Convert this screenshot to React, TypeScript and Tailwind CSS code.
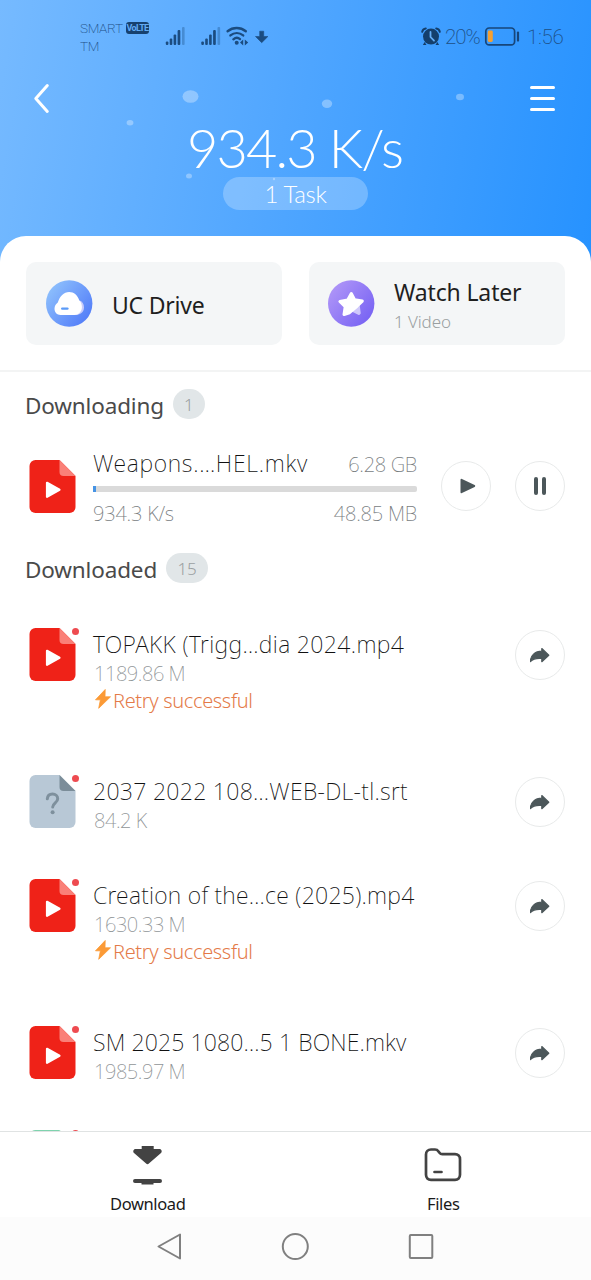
import type { ReactNode } from "react";

type FileKind = "video" | "unknown" | "audio";

interface DownloadedFile {
  name: string;
  size: string;
  kind: FileKind;
  retried?: boolean;
  titleClass: string;
}

const files: DownloadedFile[] = [
  { name: "TOPAKK (Trigg…dia 2024.mp4", size: "1189.86 M", kind: "video", retried: true, titleClass: "tracking-[0.38px]" },
  { name: "2037 2022 108…WEB-DL-tl.srt", size: "84.2 K", kind: "unknown", titleClass: "tracking-[0.3px]" },
  { name: "Creation of the…ce (2025).mp4", size: "1630.33 M", kind: "video", retried: true, titleClass: "tracking-[0.27px]" },
  { name: "SM 2025 1080…5 1 BONE.mkv", size: "1985.97 M", kind: "video", titleClass: "tracking-[0.13px]" },
];

function StatusIcons() {
  return (
    <svg className="ml-[15px] mt-[25px] h-6 w-[106px] shrink-0" viewBox="164 25 106 24" fill="#1b4c80">
      {[0, 35.5].map((dx) => (
        <g key={dx} transform={`translate(${dx} 0)`}>
          <rect x="165.8" y="41.5" width="2.6" height="3.5" rx="1" />
          <rect x="169.7" y="38.5" width="2.6" height="6.5" rx="1" />
          <rect x="173.6" y="34.5" width="2.6" height="10.5" rx="1" />
          <rect x="177.6" y="30" width="2.7" height="15" rx="1" />
          <rect x="182" y="27" width="2.6" height="18" rx="1" opacity=".35" />
        </g>
      ))}
      <g fill="none" stroke="#1b4c80" strokeWidth="2.4" strokeLinecap="round">
        <path d="M227.6 31.2c5.4-4.3 12.8-4.3 18.2 0" />
        <path d="M230.4 35.4c3.8-3.1 9-3.1 12.8 0" />
        <path d="M233.4 39.3c2-1.7 4.8-1.7 6.6-.2" />
      </g>
      <circle cx="236.7" cy="42.8" r="2" />
      <path d="M243.2 39.5v6l-3.2-3zM244.8 39.5v6l3.4-3z" />
      <path d="M259.7 31.2h4v5.3h4.2l-6.2 6.2-6.2-6.2h4.2z" stroke="#1b4c80" strokeWidth=".6" strokeLinejoin="round" />
    </svg>
  );
}

function AlarmIcon() {
  return (
    <svg className="mt-[26px] h-5 w-5 shrink-0" viewBox="421 26 20 20" fill="#143f6c">
      <circle cx="431" cy="36.6" r="8" />
      <path d="M424.6 42l-1.7 2.9h3.6zM437.4 42l1.7 2.9h-3.6z" />
      <path d="M422.2 31.8c.3-1.8 1.7-3.2 3.6-3.4M439.8 31.8c-.3-1.8-1.7-3.2-3.6-3.4" fill="none" stroke="#143f6c" strokeWidth="2" strokeLinecap="round" />
      <path d="M430.5 32v5l3.500 3.700" fill="none" stroke="#62acf5" strokeWidth="1.8" strokeLinecap="round" strokeLinejoin="round" />
    </svg>
  );
}

function StatusBar() {
  return (
    <div className="flex h-[61px] text-[#1d4f86]">
      <div className="ml-[80px] mt-[19px] w-[46px] shrink-0 font-['Roboto','Noto_Sans',sans-serif] text-[13.5px] font-extralight leading-[18px] tracking-[-0.3px]">
        SMART TM
      </div>
      <div className="mt-[22px] flex h-3 w-[23px] shrink-0 items-center justify-center rounded-[3px] bg-[#17416f] font-['Roboto',sans-serif] text-[9px] font-bold leading-none tracking-[-0.7px] text-[#62acf5]">
        VoLTE
      </div>
      <StatusIcons />
      <div className="grow" />
      <AlarmIcon />
      <span className="ml-[4px] mt-[24px] w-[39px] font-['Roboto',sans-serif] text-[20.5px] font-extralight leading-[27px] tracking-[-1px]">20%</span>
      <svg className="mt-[26px] h-[21px] w-[36px] shrink-0" viewBox="484 26 36 21">
        <rect x="485.8" y="28" width="28.8" height="16.8" rx="3.4" fill="none" stroke="#17467a" strokeWidth="1.7" />
        <rect x="487.8" y="30.6" width="5" height="11.4" rx="1.4" fill="#f5a031" />
        <path d="M518 32.6v8" stroke="#17467a" strokeWidth="2.2" strokeLinecap="round" />
      </svg>
      <span className="ml-[7px] mr-[21px] mt-[24px] w-[43px] font-['Roboto',sans-serif] text-[20.5px] font-extralight leading-[27px] tracking-[-0.3px]">1:56</span>
    </div>
  );
}

function Header() {
  return (
    <header className="relative h-[236px]">
      <svg className="absolute left-0 top-0 h-[236px] w-full" viewBox="0 0 591 236" fill="#fff" fillOpacity=".32">
        <ellipse cx="190.5" cy="96.5" rx="8" ry="6.3" />
        <ellipse cx="130" cy="122.7" rx="3.4" ry="2.8" />
        <ellipse cx="327" cy="103.8" rx="5.2" ry="4.2" />
        <ellipse cx="460" cy="97" rx="4" ry="3.2" />
        <ellipse cx="189" cy="176" rx="3" ry="2.5" />
        <circle cx="274" cy="179" r="1.2" />
      </svg>
      <div className="relative">
        <StatusBar />
        <div className="flex h-[62px] items-start justify-between pl-[33px] pr-[36px] pt-[22px]">
          <svg className="h-[32px] w-[18px]" viewBox="33 83 18 32" fill="none" stroke="#fff" strokeWidth="3" strokeLinecap="round" strokeLinejoin="round">
            <path d="M47.3 85.500L35.800 98.500L47.300 111.500" />
          </svg>
          <div className="mt-[3px] flex w-[25px] flex-col gap-[8px]">
            <span className="h-[3px] rounded-full bg-white" />
            <span className="h-[3px] rounded-full bg-white" />
            <span className="h-[3px] rounded-full bg-white" />
          </div>
        </div>
        <div className="h-[54px] whitespace-nowrap pl-[187px] font-['Lato',sans-serif] text-[54px] font-light leading-[49px] tracking-[-1.8px] text-white">
          934.3 K/s
        </div>
        <div className="ml-[223px] flex h-[33px] w-[145px] items-center justify-center rounded-full bg-white/25 pt-px font-['Lato',sans-serif] text-[24px] font-light leading-none tracking-[-0.3px] text-white">
          1 Task
        </div>
      </div>
    </header>
  );
}

function DriveIcon() {
  return (
    <svg className="h-[47px] w-[47px] shrink-0" viewBox="0 0 47 47">
      <defs>
        <linearGradient id="drive" x1="0" y1="0.1" x2="1" y2="0.9">
          <stop offset="0" stopColor="#92c5fd" />
          <stop offset="1" stopColor="#4d77f8" />
        </linearGradient>
      </defs>
      <circle cx="23.2" cy="23.5" r="23.2" fill="url(#drive)" />
      <path d="M28 35c3 .3 10-1 10-7.500 0-3.500-1.800-6-4.300-7z" fill="#c7ccfb" />
      <path d="M14.500 35C11 35 8.500 32.300 8.500 28.800c0-2.800 1.500-4.800 3.300-6.200C13.600 16.500 17.800 12 23.200 12c4.800 0 8.500 3.400 10 8.200 1.700 1.600 2.700 4 2.700 6.800 0 4.700-3.400 8-7.600 8z" fill="#fff" />
      <path d="M16.200 28.600h5.200" stroke="#5b9bf8" strokeWidth="2.4" strokeLinecap="round" />
    </svg>
  );
}

function StarIcon() {
  return (
    <svg className="h-[47px] w-[47px] shrink-0" viewBox="0 0 47 47">
      <defs>
        <linearGradient id="later" x1="0" y1="0.1" x2="1" y2="0.9">
          <stop offset="0" stopColor="#b399f8" />
          <stop offset="1" stopColor="#735ff3" />
        </linearGradient>
      </defs>
      <circle cx="23.2" cy="23.5" r="23.2" fill="url(#later)" />
      <path d="M24.500 31l6.500-5.500 1 7.800-1 1z" fill="#cfc8fb" stroke="#cfc8fb" strokeWidth="1.500" strokeLinejoin="round" />
      <path d="M23.300 13.500l3.300 6.300 7.700 1.300-5.300 5.200-7.500 6.400-5.500 1.800 1.200-7.700-5.300-5.300 7.800-1.600z" fill="#fff" stroke="#fff" strokeWidth="3" strokeLinejoin="round" />
    </svg>
  );
}

function FileIcon({ kind }: { kind: FileKind }) {
  const base = kind === "video" ? "#ef2218" : kind === "unknown" ? "#b8c8d6" : "#7fd3ae";
  const fold = kind === "video" ? "#fa8078" : kind === "unknown" ? "#7b8d99" : "#b5e6d0";
  return (
    <svg className="h-[53px] w-[47px] shrink-0" viewBox="-0.5 0 47 53">
      <path d="M6 0H30L46 16V47a6 6 0 0 1-6 6H6a6 6 0 0 1-6-6V6a6 6 0 0 1 6-6z" fill={base} />
      <path d="M30 0L46 16H34a4 4 0 0 1-4-4z" fill={fold} />
      {kind === "video" && (
        <path d="M17.500 22.800L30 29.800L17.500 36.800z" fill="#fff" stroke="#fff" strokeWidth="2.2" strokeLinejoin="round" />
      )}
      {kind === "unknown" && (
        <g>
          <path d="M17.800 23.800c.3-3 2.300-4.700 5.200-4.700 3 0 5.200 1.800 5.200 4.600 0 4-5 4.200-5 8.400" fill="none" stroke="#7e909d" strokeWidth="3" strokeLinecap="round" />
          <circle cx="23.1" cy="37.2" r="2" fill="#7e909d" />
        </g>
      )}
    </svg>
  );
}

function RoundButton({ children, className = "" }: { children: ReactNode; className?: string }) {
  return (
    <button className={`flex h-[50px] w-[50px] shrink-0 items-center justify-center rounded-full border border-[#e8eaea] ${className}`}>
      {children}
    </button>
  );
}

function SectionTitle({ title, count, badgeClass }: { title: string; count: string; badgeClass: string }) {
  return (
    <div className="flex h-[30px] shrink-0 items-center pl-[25px]">
      <h2 className="mt-[4px] font-['Noto_Sans',sans-serif] text-[22.5px] font-normal leading-[30px] tracking-[-0.15px] text-[#4a4a4a]">{title}</h2>
      <span className={`flex h-[30px] items-center justify-center rounded-full bg-[#e1e6e8] font-['Noto_Sans',sans-serif] text-[17px] font-light leading-none text-[#9a9fa1] ${badgeClass}`}>
        {count}
      </span>
    </div>
  );
}

function FileRow({ file }: { file: DownloadedFile }) {
  return (
    <li className={`flex shrink-0 pl-[29px] pr-[26px] ${file.retried ? "h-[147px]" : "h-[104px]"}`}>
      <div className="relative h-[53px] w-[47px]">
        <FileIcon kind={file.kind} />
        <span className="absolute -right-[3px] top-0 h-[7px] w-[7px] rounded-full bg-[#ee4b50]" />
      </div>
      <div className="ml-[17px] grow whitespace-nowrap pt-[2px] font-['Noto_Sans',sans-serif]">
        <div className={`text-[23px] font-extralight leading-[28px] text-[#111] ${file.titleClass}`}>{file.name}</div>
        <div className="mt-[3px] pl-px text-[20px] font-extralight leading-[26px] tracking-[-0.45px] text-[#909597]">{file.size}</div>
        {file.retried && (
          <div className="mt-px flex items-center text-[20px] font-light leading-[26px] tracking-[-0.35px] text-[#e47a48]">
            <svg className="-mt-[4px] ml-[2px] mr-[2px] h-5 w-4 shrink-0" viewBox="0 0 16 20" fill="#fb9a36">
              <path d="M10.2.5L.5 10.800h4.900L3.700 19.300l11.800-11.500H10z" stroke="#fb9a36" strokeWidth=".8" strokeLinejoin="round" />
            </svg>
            Retry successful
          </div>
        )}
      </div>
      <RoundButton className="mt-[2px]">
        <svg className="h-[17px] w-[20px]" viewBox="0.5 0 20 17" fill="#4c575a" stroke="#4c575a" strokeWidth="1.2" strokeLinejoin="round">
          <path d="M12.300 1.500l7 6.700-7 6.500v-3.200C7.500 11 3.800 11.600.9 14.500.9 8.500 5.500 4.200 12.300 4.200z" />
        </svg>
      </RoundButton>
    </li>
  );
}

export default function App() {
  return (
    <div className="flex h-[1280px] w-[591px] flex-col overflow-hidden bg-white">
      <div className="bg-[linear-gradient(100deg,#76baff_0%,#50a6ff_48%,#2692ff_100%)] bg-[length:591px_270px] bg-no-repeat">
        <Header />
        <div className="h-[134px] rounded-t-[26px] bg-white px-[26px] pt-[26px]">
          <div className="grid grid-cols-2 gap-[27px] font-['Noto_Sans',sans-serif]">
            <div className="flex h-[83px] items-center rounded-[10px] bg-[#f4f6f7] pl-[20px]">
              <DriveIcon />
              <span className="ml-[19px] mt-[2px] whitespace-nowrap text-[23px] font-normal leading-[28px] tracking-[-0.2px] text-[#1f1f1f]">UC Drive</span>
            </div>
            <div className="flex h-[83px] items-center rounded-[10px] bg-[#f4f6f7] pl-[19px]">
              <StarIcon />
              <div className="ml-[19px] mt-[5px] whitespace-nowrap">
                <div className="text-[23px] font-normal leading-[30px] tracking-[-0.15px] text-[#1f1f1f]">Watch Later</div>
                <div className="text-[17px] font-light leading-[29px] tracking-[-0.1px] text-[#9a9fa1]">1 Video</div>
              </div>
            </div>
          </div>
        </div>
      </div>

      <main className="flex h-[761px] shrink-0 flex-col overflow-hidden border-t-2 border-[#f3f4f4] pt-[17px]">
        <SectionTitle title="Downloading" count="1" badgeClass="ml-[9px] w-[32px]" />
        <div className="mt-[30px] flex h-[90px] shrink-0 items-start pl-[29px] pr-[26px] font-['Noto_Sans',sans-serif]">
          <div className="mt-[11px]">
            <FileIcon kind="video" />
          </div>
          <div className="ml-[17px] w-[324px] whitespace-nowrap">
            <div className="flex h-[28px] items-center justify-between">
              <span className="text-[23px] font-extralight leading-[28px] tracking-[0.7px] text-[#111]">Weapons.…HEL.mkv</span>
              <span className="mt-[3px] text-[20px] font-extralight leading-[26px] tracking-[-0.3px] text-[#777c7e]">6.28 GB</span>
            </div>
            <div className="mt-[9px] h-[6px] overflow-hidden rounded-r-[2px] bg-[#dadada]">
              <div className="h-full w-[3px] bg-[#4593e4]" />
            </div>
            <div className="mt-[9px] flex justify-between text-[20px] font-extralight leading-[26px] tracking-[-0.2px] text-[#777c7e]">
              <span>934.3 K/s</span>
              <span>48.85 MB</span>
            </div>
          </div>
          <RoundButton className="ml-[24px] mt-[12px]">
            <svg className="ml-[3px] h-4 w-4" viewBox="0 0 16 16" fill="#4c575a" stroke="#4c575a" strokeWidth="2" strokeLinejoin="round">
              <path d="M1.500 1.800L14.200 8L1.500 14.200z" />
            </svg>
          </RoundButton>
          <RoundButton className="ml-[24px] mt-[12px]">
            <span className="mr-[4px] h-[18px] w-[4px] rounded-[2px] bg-[#4c575a]" />
            <span className="h-[18px] w-[4px] rounded-[2px] bg-[#4c575a]" />
          </RoundButton>
        </div>
        <div className="h-[14px] shrink-0" />
        <SectionTitle title="Downloaded" count="15" badgeClass="ml-[9px] w-[42px]" />
        <ul className="mt-[45px] flex flex-col">
          {files.map((file) => (
            <FileRow key={file.name} file={file} />
          ))}
          <li className="flex pl-[29px]">
            <div className="relative">
              <FileIcon kind="audio" />
              <span className="absolute -right-[3px] top-0 h-[7px] w-[7px] rounded-full bg-[#ee4b50]" />
            </div>
          </li>
        </ul>
      </main>

      <nav className="grid h-[86px] shrink-0 grid-cols-2 border-t border-[#e0e3e3] font-['Noto_Sans',sans-serif] text-[16.5px] font-normal leading-[22px] text-[#1a1a1a]">
        <div className="flex flex-col items-center pt-[12px]">
          <svg className="h-[44px] w-[32px]" viewBox="0.5 0 32 44" fill="#434343">
            <path d="M10.200 2h12v3h5.800c2 0 3 2.600 1.500 4L17.400 19.600c-.8.700-2 .7-2.800 0L2.500 9C1 7.600 2 5 4 5h6.200z" />
            <path d="M3.500 35h25a2 2 0 0 1 0 4H22v1.500H10V39H3.500a2 2 0 0 1 0-4z" />
          </svg>
          <span className="mt-[5px] tracking-[-0.4px]">Download</span>
        </div>
        <div className="flex flex-col items-center pt-[12px]">
          <svg className="h-[44px] w-[38px]" viewBox="0 0 38 44" fill="none" stroke="#434343" strokeWidth="2.7" strokeLinecap="round" strokeLinejoin="round">
            <path d="M7 5.500H11c1.600 0 2.600.6 3.500 1.900l1 1.400c.7 1 1.500 1.400 2.800 1.400H31c3 0 5 2 5 5V30.800c0 3-2 5-5 5H7c-3 0-5-2-5-5V10.500c0-3 2-5 5-5z" />
            <path d="M10.500 28h7" />
          </svg>
          <span className="mt-[5px] tracking-[-0.4px]">Files</span>
        </div>
      </nav>

      <div className="flex h-[63px] shrink-0 justify-center bg-[#fcfcfc] pt-[15px]">
        <svg className="h-[30px] w-[281px]" viewBox="155 1232 281 30" fill="none" stroke="#808080" strokeWidth="2" strokeLinejoin="round">
          <path d="M180 1234.500V1258.500L158.500 1246.500z" />
          <circle cx="295.3" cy="1246.500" r="12.500" />
          <rect x="409.800" y="1235" width="22.500" height="23" rx="1" />
        </svg>
      </div>
    </div>
  );
}
